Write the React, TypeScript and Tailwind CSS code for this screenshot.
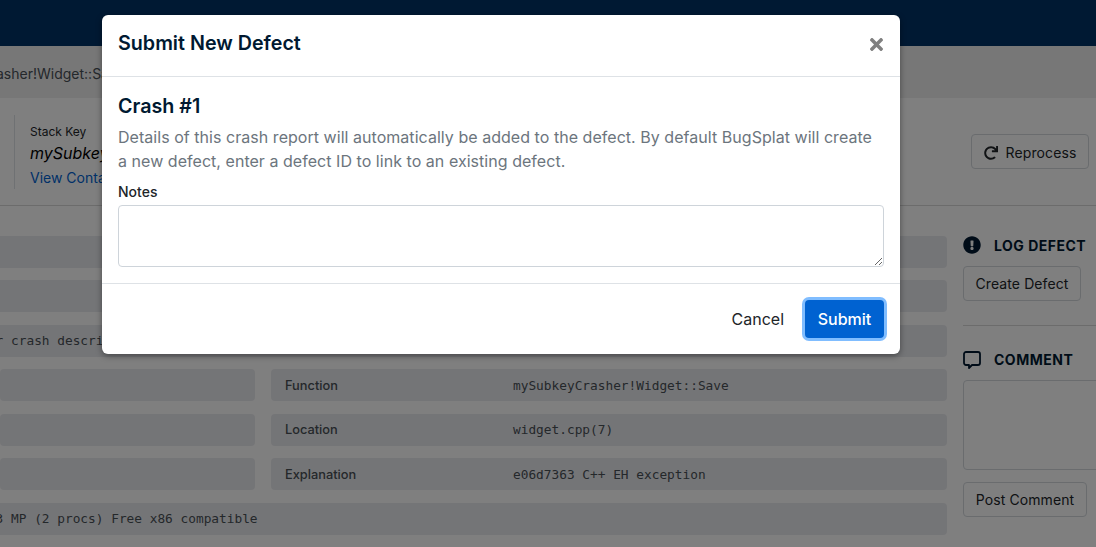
import React from "react";
import { FaExclamationCircle, FaRedo, FaTimes } from "react-icons/fa";

const mono = "pt-px font-['DejaVu_Sans_Mono',monospace] text-[12.8px] text-[#495057]";
const outlineBtn = "flex items-center rounded border border-[#d4d8dd] pt-px text-sm tracking-[0.1px] text-[#212529]";

function HalfRow({ label, value }: { label?: string; value?: string }) {
  return (
    <div className="flex h-8 items-center rounded bg-[#e9ebee] pl-3.5">
      {label && <span className="w-[228px] pt-px text-[12.8px] font-medium text-[#495057]">{label}</span>}
      {value && <span className={mono}>{value}</span>}
    </div>
  );
}

function WideRow({ text }: { text?: string }) {
  return (
    <div className="flex h-8 items-center overflow-hidden rounded-r bg-[#e9ebee]">
      {text && <span className={`${mono} -ml-[4.4px] whitespace-nowrap`}>{text}</span>}
    </div>
  );
}

function Page() {
  return (
    <div className="flex h-[547px] flex-col overflow-hidden bg-white">
      <div className="h-[46px] shrink-0 bg-[#003366]" />
      <div className="flex h-[52px] shrink-0 items-center overflow-hidden bg-[#eeeeee] pt-[3px]">
        <span className="-ml-[4px] whitespace-nowrap text-sm text-[#495057]">asher!Widget::Save</span>
      </div>
      <div className="flex h-[108px] shrink-0 items-center justify-between border-b border-[#d9d9d9] pl-3.5 pr-[7px]">
        <div className="flex h-[74px] flex-col border-l border-[#dee2e6] pl-[15px]">
          <span className="mt-[9px] text-xs leading-[16px] text-[#212529]">Stack Key</span>
          <span className="mt-px text-base italic leading-[24px] text-black">mySubkeyCrasher!Widget::Save</span>
          <span className="mt-[3px] text-sm leading-[20px] text-[#0062d1]">View Contacts</span>
        </div>
        <button className={`${outlineBtn} h-[35px] w-[118px] justify-center gap-2 !pt-[3px]`}>
          <FaRedo className="size-[14px]" />
          Reprocess
        </button>
      </div>
      <div className="flex w-[1240px] pl-0 pt-[29.5px]">
        <div className="flex w-[947px] shrink-0 flex-col gap-[12.5px]">
          <WideRow />
          <WideRow />
          <WideRow text="r crash description" />
          <div className="grid grid-cols-[255px_676px] gap-x-4 gap-y-[12.5px]">
            <HalfRow />
            <HalfRow label="Function" value="mySubkeyCrasher!Widget::Save" />
            <HalfRow />
            <HalfRow label="Location" value="widget.cpp(7)" />
            <HalfRow />
            <HalfRow label="Explanation" value="e06d7363 C++ EH exception" />
          </div>
          <WideRow text="3 MP (2 procs) Free x86 compatible" />
        </div>
        <div className="ml-4 flex w-[200px] flex-col">
          <div className="flex h-[19px] items-center gap-[13px]">
            <FaExclamationCircle className="size-[18px] text-[#001931]" />
            <span className="pt-0.5 text-sm font-bold tracking-[0.5px] text-[#001931]">LOG DEFECT</span>
          </div>
          <button className={`${outlineBtn} mt-[11px] h-[35px] w-[118px] justify-center`}>Create Defect</button>
          <div className="mt-6 h-px w-full bg-[#d9d9d9]" />
          <div className="mt-[25px] flex h-[19px] items-center gap-[13px]">
            <svg viewBox="0 0 18 18" fill="none" stroke="#001931" strokeWidth="1.8" strokeLinejoin="round" className="size-[18px]">
              <path d="M3 1h12a2 2 0 0 1 2 2v9a2 2 0 0 1-2 2H9l-3 3v-3H3a2 2 0 0 1-2-2V3a2 2 0 0 1 2-2z" />
            </svg>
            <span className="text-sm font-bold tracking-[0.5px] text-[#001931]">COMMENT</span>
          </div>
          <div className="mt-2.5 h-[90px] w-[190px] rounded border border-[#d4d8dd]" />
          <button className={`${outlineBtn} mt-3 h-[35px] w-[124px] justify-center`}>Post Comment</button>
        </div>
      </div>
    </div>
  );
}

export default function App() {
  return (
    <div className="relative h-[547px] w-[1096px] overflow-hidden font-['Inter',sans-serif]">
      <Page />
      <div className="absolute inset-0 bg-black/50" />
      <div className="absolute left-[102px] top-[15px] w-[798px] rounded-md bg-white shadow-[0_2px_6px_rgba(0,0,0,0.4)]">
        <div className="flex h-[62px] items-center justify-between border-b border-[#dee2e6] pb-1 pl-4 pr-[14px]">
          <h2 className="text-[19.7px] font-semibold text-[#001931]">Submit New Defect</h2>
          <FaTimes className="mt-px size-[19px] text-[#808080]" />
        </div>
        <div className="border-b border-[#dee2e6] px-4 pb-4">
          <h3 className="mt-4 text-[19.7px] font-semibold leading-[27px] text-[#001931]">Crash #1</h3>
          <p className="mt-[5px] text-base leading-6 tracking-[0.04px] text-[#6c757d]">
            Details of this crash report will automatically be added to the defect. By default BugSplat will create
            <br />a new defect, enter a defect ID to link to an existing defect.
          </p>
          <label className="mt-[9px] block text-sm font-medium leading-[20px] text-[#212529]">Notes</label>
          <textarea className="mt-[3px] block h-[62px] w-full rounded border border-[#ced4da] bg-white" />
        </div>
        <div className="flex h-[70px] items-center justify-end gap-[21px] px-4">
          <span className="text-base text-[#212529]">Cancel</span>
          <button className="h-[38px] w-[79px] rounded bg-[#0062d1] text-base font-medium text-white shadow-[0_0_0_3px_#80bdff]">
            Submit
          </button>
        </div>
      </div>
    </div>
  );
}
